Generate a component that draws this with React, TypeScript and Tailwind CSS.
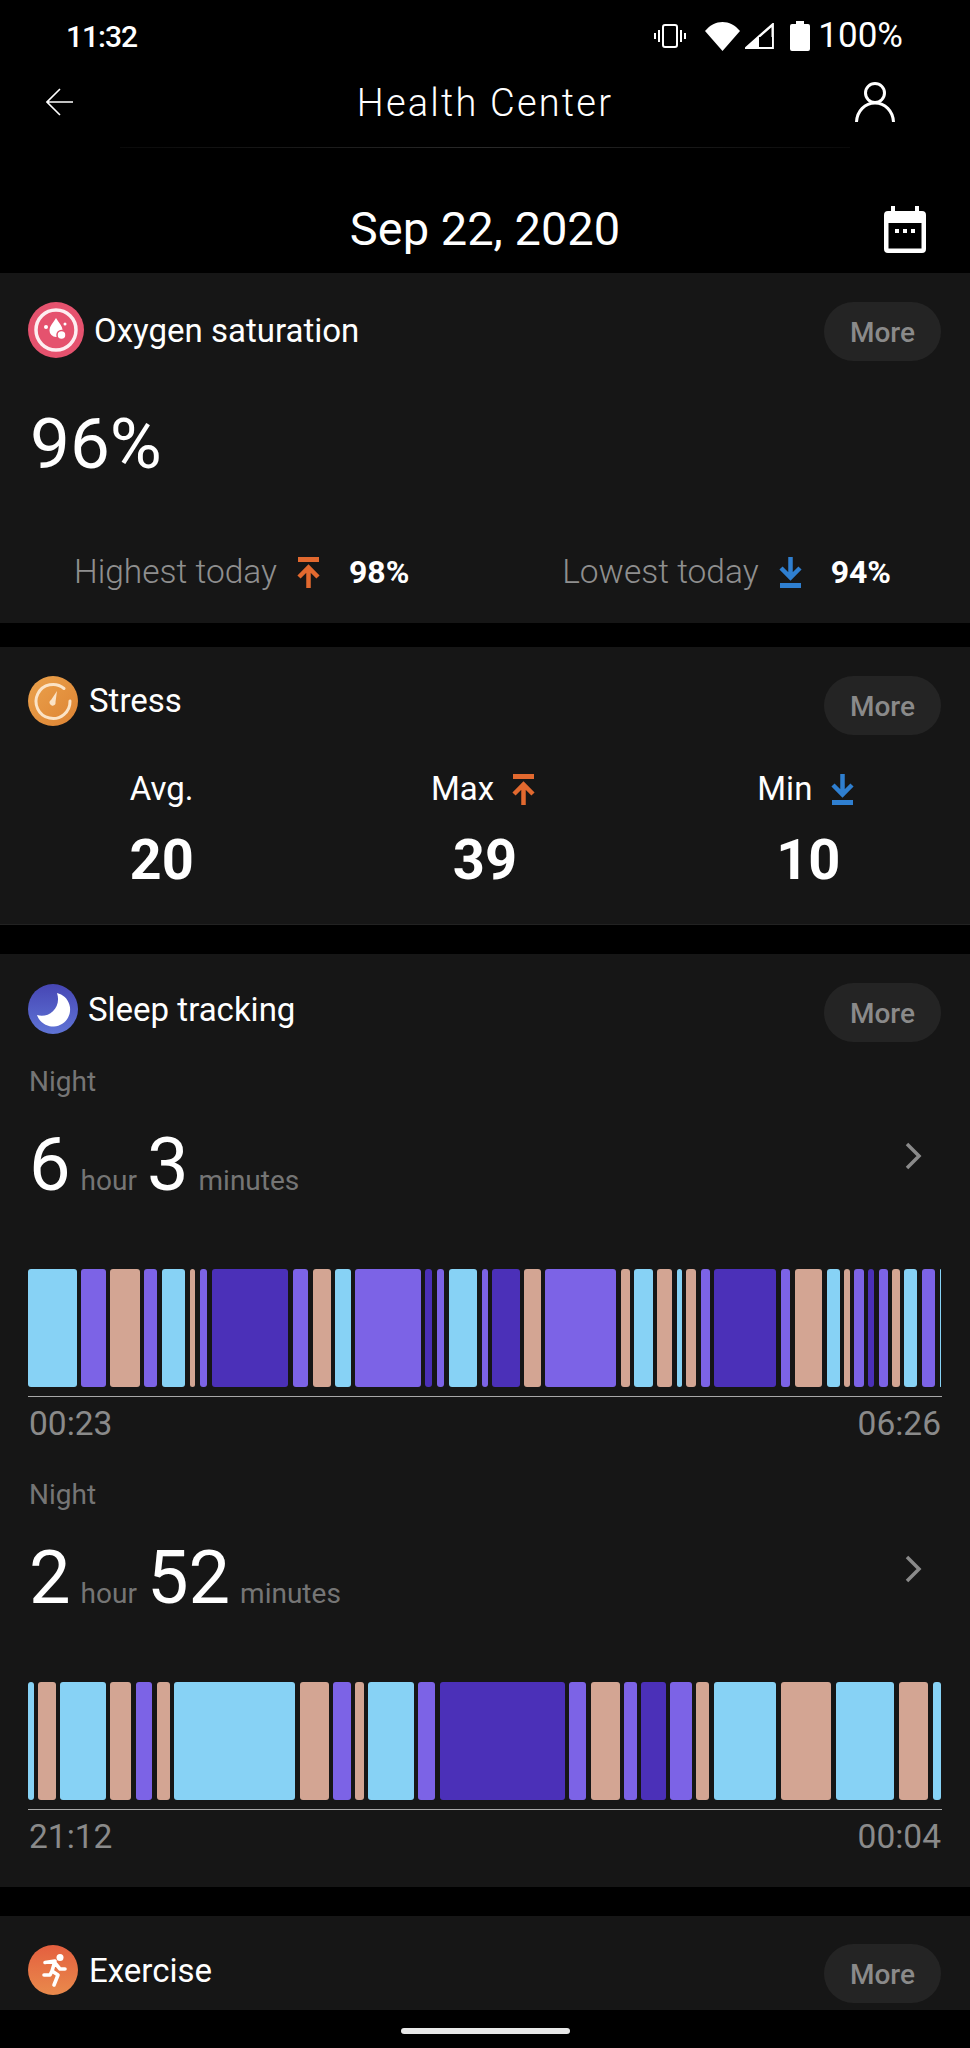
type Stage = 'l' | 'p' | 's' | 'd'
type Seg = [number, number, Stage]

const STAGE_COLOR: Record<Stage, string> = {
  l: '#87d2f5',
  p: '#7c63e6',
  s: '#d3a593',
  d: '#4b30b8',
}

// start / end x in px, read off the screenshot
const NIGHT_A: Seg[] = [
  [28.3, 76.7, 'l'], [81.3, 105.7, 'p'], [110.3, 139.7, 's'], [144, 156.7, 'p'], [161.7, 185, 'l'],
  [190, 195.3, 's'], [200, 207.3, 'p'], [212, 288, 'd'], [293, 308, 'p'], [312.7, 330.7, 's'],
  [335.3, 350.7, 'l'], [355, 420.7, 'p'], [425, 432.3, 'd'], [437, 444.3, 'p'], [448.7, 477.3, 'l'],
  [482.3, 487.7, 'p'], [492.3, 519.7, 'd'], [524, 541, 's'], [545.7, 616.3, 'p'], [621, 630, 's'],
  [634.3, 653, 'l'], [657.3, 672.7, 's'], [677, 682.3, 'l'], [686.7, 696.7, 's'], [701.3, 710, 'p'],
  [714.7, 776.7, 'd'], [781.3, 790.7, 'p'], [795.3, 822.7, 's'], [827, 840.3, 'l'], [844.7, 850, 's'],
  [854.7, 864.3, 'p'], [868.7, 874.3, 'd'], [879, 888, 'p'], [892.3, 900.3, 's'], [904.7, 917.3, 'l'],
  [922, 935, 'p'], [940, 941.7, 'l'],
]

const NIGHT_B: Seg[] = [
  [28.3, 33.7, 'l'], [38.3, 55.7, 's'], [60, 105.7, 'l'], [110.3, 131.3, 's'], [136, 152.3, 'p'],
  [156.7, 169.7, 's'], [174.3, 295, 'l'], [299.7, 328.7, 's'], [333.3, 350.7, 'p'], [355, 364, 's'],
  [368.3, 413.7, 'l'], [418, 435, 'p'], [439.7, 564.7, 'd'], [569, 586, 'p'], [590.7, 620, 's'],
  [624.3, 636.7, 'p'], [641.3, 666, 'd'], [670.7, 692, 'p'], [696.3, 709.7, 's'], [714, 776.7, 'l'],
  [781.3, 831.3, 's'], [836, 894.7, 'l'], [899.3, 928.3, 's'], [933, 941.7, 'l'],
]

function UpIcon() {
  return (
    <svg width="27" height="31" viewBox="0 0 27 31" fill="none" stroke="#e2692f" strokeWidth="4.500">
      <path d="M3 2.500h21" strokeWidth="5" />
      <path d="M13.500 31V11M4 20l9.500-9.500L23 20" />
    </svg>
  )
}

function DownIcon() {
  return (
    <svg width="27" height="31" viewBox="0 0 27 31" fill="none" stroke="#2f7fd0" strokeWidth="4.500">
      <path d="M13.500 0v20M4 11l9.500 9.500L23 11" />
      <path d="M3 28.500h21" strokeWidth="5" />
    </svg>
  )
}

function OxygenIcon() {
  return (
    <svg width="56" height="56" viewBox="0 0 56 56" className="shrink-0">
      <circle cx="28" cy="28" r="28" fill="#e5526e" />
      <circle cx="28" cy="28" r="20" fill="none" stroke="#fff" strokeOpacity="0.9" strokeWidth="3.500" />
      <path d="M28 16c3 5 6.500 8 6.500 12.500a6.500 6.500 0 0 1-13 0C21.500 24 25 21 28 16z" fill="#fff" />
      <circle cx="33.500" cy="33" r="4.500" fill="#fff" stroke="#e5526e" strokeWidth="1.500" />
      <circle cx="18" cy="25" r="2" fill="#fff" />
      <circle cx="37" cy="22" r="1.500" fill="#fff" />
    </svg>
  )
}

function StressIcon() {
  return (
    <svg width="50" height="50" viewBox="0 0 50 50" className="shrink-0">
      <defs>
        <linearGradient id="stressFill" x1="0" y1="0" x2="1" y2="1">
          <stop offset="0" stopColor="#eba24c" />
          <stop offset="1" stopColor="#dd8333" />
        </linearGradient>
      </defs>
      <circle cx="25" cy="25" r="25" fill="url(#stressFill)" />
      <path d="M36 12.500A17 17 0 1 0 42 25" fill="none" stroke="#fbe3c6" strokeWidth="3" strokeLinecap="round" />
      <path d="M29 15l-1.500 11a3 3 0 1 1-4.500-2z" fill="#fbe3c6" />
    </svg>
  )
}

function SleepIcon() {
  return (
    <svg width="50" height="50" viewBox="0 0 50 50" className="shrink-0">
      <defs>
        <linearGradient id="sleepFill" x1="0.500" y1="0" x2="0.500" y2="1">
          <stop offset="0" stopColor="#4646b4" />
          <stop offset="1" stopColor="#5f74d6" />
        </linearGradient>
      </defs>
      <circle cx="25" cy="25" r="25" fill="url(#sleepFill)" />
      <path d="M29 9A17 17 0 1 1 9 31C20 35 34 24 29 9z" fill="#fff" />
    </svg>
  )
}

function ExerciseIcon() {
  return (
    <svg width="50" height="50" viewBox="0 0 50 50" className="shrink-0">
      <defs>
        <linearGradient id="exerciseFill" x1="0.500" y1="0" x2="0.500" y2="1">
          <stop offset="0" stopColor="#e45f3f" />
          <stop offset="1" stopColor="#e98a4c" />
        </linearGradient>
      </defs>
      <circle cx="25" cy="25" r="25" fill="url(#exerciseFill)" />
      <circle cx="32" cy="12.500" r="3.500" fill="#fff" />
      <path
        d="M17 17.500l10-1.500-3 10 6 4-4 10M27 18l5 6h5M24 26l-2 4h-6"
        fill="none"
        stroke="#fff"
        strokeWidth="3.600"
        strokeLinecap="round"
        strokeLinejoin="round"
      />
    </svg>
  )
}

function CardHeader({ icon, title, gap, lift }: { icon: React.ReactNode; title: string; gap: string; lift?: string }) {
  return (
    <div className="flex justify-between items-start pl-[28px] pr-[29px] h-[59px]">
      <div className={`flex items-center ${gap}`}>
        {icon}
        <span className={`text-[33px] leading-[50px] text-white ${lift ?? 'pt-[2px]'}`}>{title}</span>
      </div>
      <div className="w-[117px] h-[59px] pt-[2px] rounded-[30px] bg-[#242424] flex items-center justify-center text-[28px] font-medium text-[#8a8a8a]">
        More
      </div>
    </div>
  )
}

function SleepBar({ segs }: { segs: Seg[] }) {
  return (
    <div className="flex h-[118px] mt-[67px]">
      {segs.map(([a, b, stage], i) => (
        <div
          key={i}
          className="rounded-[3px] h-full shrink-0"
          style={{
            width: b - a,
            marginLeft: i === 0 ? a : a - segs[i - 1][1],
            backgroundColor: STAGE_COLOR[stage],
          }}
        />
      ))}
    </div>
  )
}

function NightBlock({ big, small, segs, from, to, top }: {
  big: string; small: string; segs: Seg[]; from: string; to: string; top: string
}) {
  return (
    <div>
      <div className={`${top} pl-[29px] text-[28px] leading-[30px] text-[#757575] pt-[1px] h-[30px]`}>Night</div>
      <div className="mt-[26px] h-[80px] pl-[29px] pr-[47px] flex items-center justify-between">
        <div className="flex items-baseline text-white pt-[5px]">
          <span className="text-[74px] leading-[80px]">{big}</span>
          <span className="ml-[10px] mr-[10px] text-[28px] text-[#757575]">hour</span>
          <span className="text-[74px] leading-[80px]">{small}</span>
          <span className="ml-[10px] text-[28px] text-[#757575]">minutes</span>
        </div>
        <svg className="mb-[12px]" width="20" height="30" viewBox="0 0 20 30" fill="none" stroke="#8a8a8a" strokeWidth="3.500">
          <path d="M4 3l12 12L4 27" />
        </svg>
      </div>
      <SleepBar segs={segs} />
      <div className="mt-[9px] ml-[28px] mr-[28px] h-px bg-[#a8a8a8]" />
      <div className="mt-[12px] mb-[-2px] flex justify-between px-[29px] text-[33.500px] leading-[30px] text-[#8a8a8a]">
        <span>{from}</span>
        <span>{to}</span>
      </div>
    </div>
  )
}

export default function App() {
  return (
    <div className="w-[970px] h-[2048px] overflow-hidden bg-black text-white [font-family:Roboto,sans-serif]">
      {/* status bar */}
      <div className="h-[72px] flex items-center justify-between pl-[66px] pr-[67px]">
        <span className="text-[30px] font-medium tracking-[-1px]">11:32</span>
        <div className="flex items-center">
          <svg width="32" height="24" viewBox="0 0 32 24" fill="none" stroke="#fff" strokeWidth="2">
            <rect x="9" y="1" width="14" height="22" rx="2" />
            <path d="M5 6v12M1 9v6M27 6v12M31 9v6" />
          </svg>
          <svg className="ml-[19px]" width="35" height="29" viewBox="0 0 35 29">
            <path d="M0 9C5 3 11 0 17.500 0S30 3 35 9L17.500 29z" fill="#fff" />
          </svg>
          <svg className="ml-[5px]" width="29" height="26" viewBox="0 0 29 26" fill="none">
            <path d="M1.500 24.700L27.700 1.500v23.200z" stroke="#fff" strokeWidth="2.400" />
            <path d="M14 14h13v10H14z" fill="#000" />
            <path d="M1.500 24.700L14 13.700v11z" fill="#fff" />
          </svg>
          <svg className="ml-[16px]" width="20" height="30" viewBox="0 0 20 30">
            <path d="M6 0h8v3h4a2 2 0 0 1 2 2v23a2 2 0 0 1-2 2H2a2 2 0 0 1-2-2V5a2 2 0 0 1 2-2h4z" fill="#fff" />
          </svg>
          <span className="ml-[8px] text-[35px] leading-[40px]">100%</span>
        </div>
      </div>

      {/* nav */}
      <div className="h-[60px] grid grid-cols-[1fr_auto_1fr] items-center">
        <div className="pl-[46px]">
          <svg width="27" height="28" viewBox="0 0 27 28" fill="none" stroke="#fff" strokeWidth="1.600">
            <path d="M27 14H1M14 1L1 14l13 13" />
          </svg>
        </div>
        <span className="text-[38px] font-light tracking-[2.2px] pt-[2px]">Health Center</span>
        <div className="flex justify-end pr-[75px]">
          <svg width="40" height="40" viewBox="0 0 40 40" fill="none" stroke="#fff" strokeWidth="3">
            <circle cx="20" cy="11" r="9.500" />
            <path d="M1.500 40C2 29 10 21 20 21s18 8 18.500 19" />
          </svg>
        </div>
      </div>
      <div className="mt-[15px] mx-[120px] h-px bg-gradient-to-r from-[#0a0a0a] via-[#2a2a2a] to-[#0a0a0a]" />

      {/* date */}
      <div className="h-[125px] pt-[51px] grid grid-cols-[1fr_auto_1fr]">
        <div />
        <span className="text-[47px] leading-[60px]">Sep 22, 2020</span>
        <div className="flex justify-end pr-[44px] pt-[7px]">
          <svg width="42" height="47" viewBox="0 0 42 47">
            <path d="M7 0h4v5h20V0h4v5h3a4 4 0 0 1 4 4v34a4 4 0 0 1-4 4H4a4 4 0 0 1-4-4V9a4 4 0 0 1 4-4h3z" fill="#fff" />
            <rect x="4.500" y="17" width="33" height="25.500" fill="#000" />
            <rect x="11" y="23" width="4" height="4" fill="#fff" />
            <rect x="19" y="23" width="4" height="4" fill="#fff" />
            <rect x="27" y="23" width="4" height="4" fill="#fff" />
          </svg>
        </div>
      </div>

      {/* oxygen */}
      <section className="bg-[#161616] pt-[29px] h-[350px]">
        <CardHeader icon={<OxygenIcon />} title="Oxygen saturation" gap="gap-[10px]" />
        <div className="mt-[43px] pl-[30px] h-[80px] text-[71px] leading-[80px]">96%</div>
        <div className="mt-[68px] h-[40px] flex items-center justify-between pl-[74px] pr-[79px]">
          <div className="flex items-center">
            <span className="text-[33.500px] font-light text-[#8f8f8f]">Highest today</span>
            <span className="ml-[18px]"><UpIcon /></span>
            <span className="ml-[27px] text-[32px] font-bold">98%</span>
          </div>
          <div className="flex items-center">
            <span className="text-[33.500px] font-light text-[#8f8f8f]">Lowest today</span>
            <span className="ml-[18px]"><DownIcon /></span>
            <span className="ml-[27px] text-[32px] font-bold">94%</span>
          </div>
        </div>
      </section>

      {/* stress */}
      <section className="mt-[24px] bg-[#161616] pt-[29px] h-[278px] border-b border-[#222222]">
        <CardHeader icon={<StressIcon />} title="Stress" gap="gap-[11px]" lift="pt-0" />
        <div className="grid grid-cols-3 mt-[34px] text-center">
          <div className="h-[40px] flex items-center justify-center text-[33px]">Avg.</div>
          <div className="h-[40px] flex items-center justify-center text-[33px] pr-[2px]">
            Max<span className="ml-[16px]"><UpIcon /></span>
          </div>
          <div className="h-[40px] flex items-center justify-center text-[33px] pr-[3px]">
            Min<span className="ml-[17px]"><DownIcon /></span>
          </div>
          <div className="mt-[21px] text-[56px] leading-[60px] font-bold">20</div>
          <div className="mt-[21px] text-[56px] leading-[60px] font-bold">39</div>
          <div className="mt-[21px] text-[56px] leading-[60px] font-bold">10</div>
        </div>
      </section>

      {/* sleep */}
      <section className="mt-[29px] bg-[#161616] pt-[29px] h-[933px]">
        <CardHeader icon={<SleepIcon />} title="Sleep tracking" gap="gap-[10px]" />
        <NightBlock top="mt-[24px]" big="6" small="3" segs={NIGHT_A} from="00:23" to="06:26" />
        <NightBlock top="mt-[42px]" big="2" small="52" segs={NIGHT_B} from="21:12" to="00:04" />
      </section>

      {/* exercise */}
      <section className="mt-[29px] bg-[#161616] pt-[28px] h-[94px]">
        <CardHeader icon={<ExerciseIcon />} title="Exercise" gap="gap-[11px]" />
      </section>

      <div className="h-[38px] flex justify-center pt-[18px]">
        <div className="w-[169px] h-[6px] rounded-[3px] bg-[#e8e8e8]" />
      </div>
    </div>
  )
}
